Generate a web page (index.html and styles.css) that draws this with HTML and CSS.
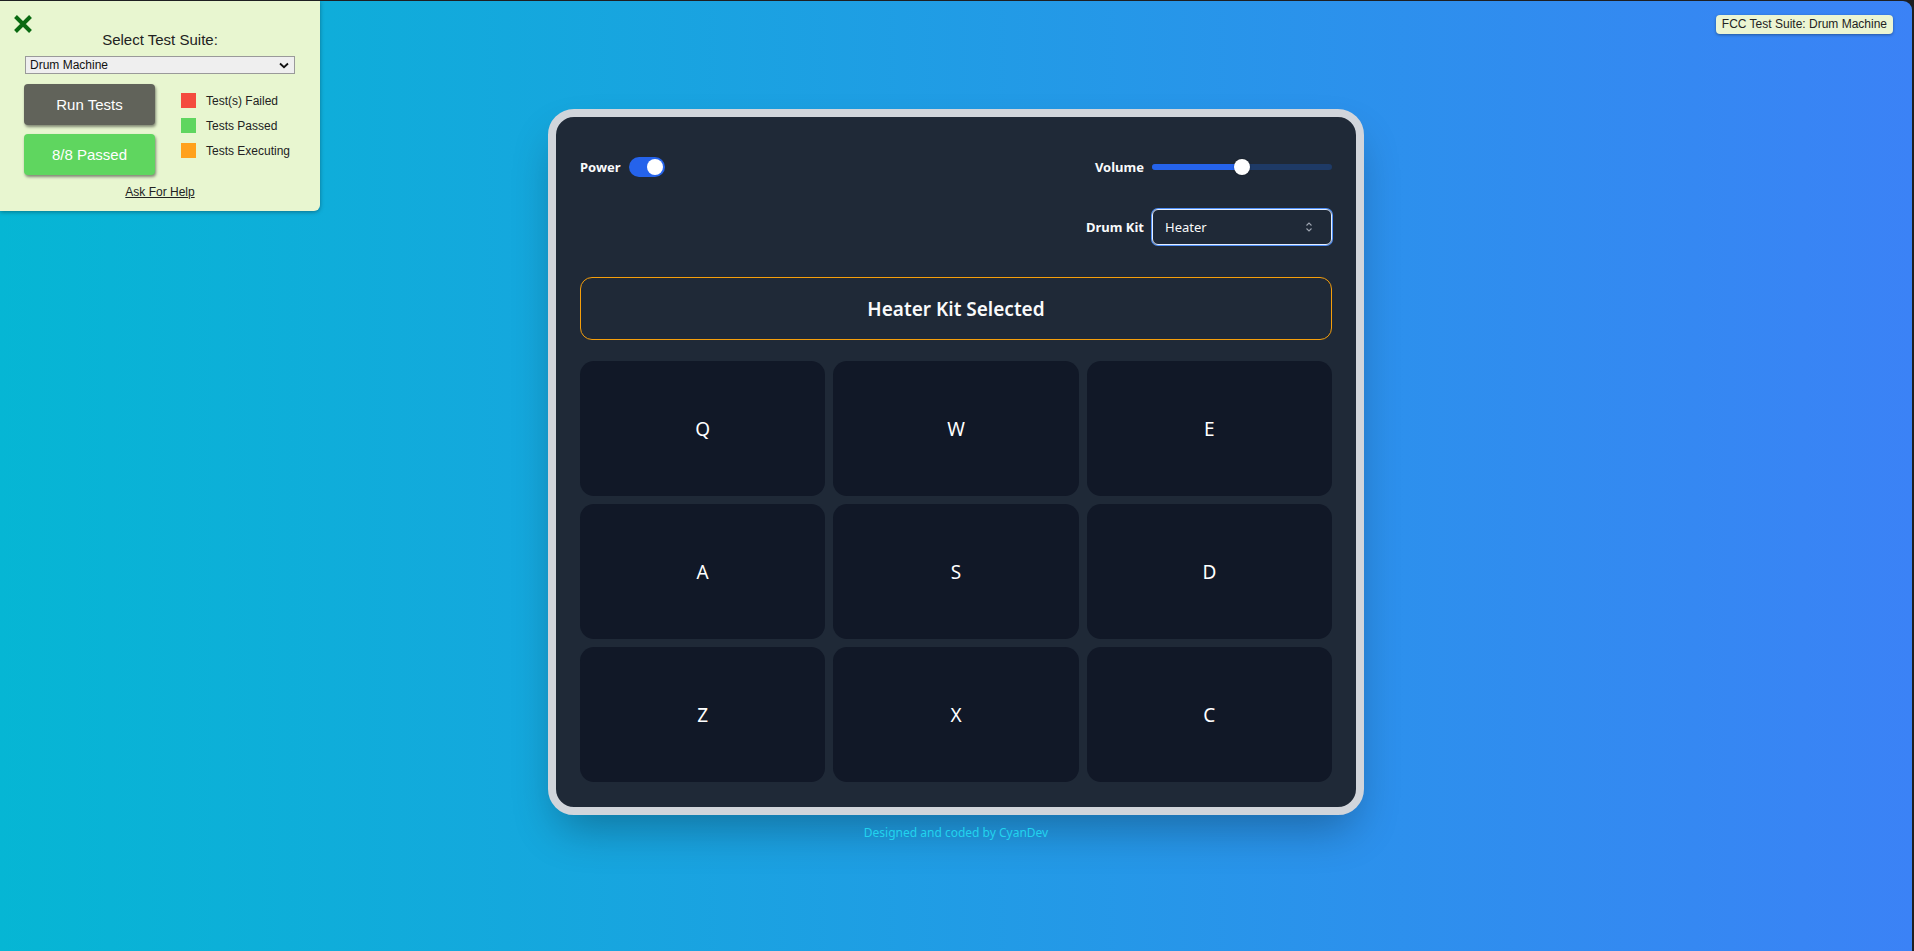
FILE: index.html
```html
<!DOCTYPE html>
<html lang="en">
<head>
<meta charset="utf-8">
<title>Drum Machine</title>
<link rel="stylesheet" href="styles.css">
</head>
<body>
<div class="viewport">
  <aside class="fcc-panel">
    <svg class="fcc-close" width="20" height="20" viewBox="0 0 20 20"><path d="M2.5 2.5 L17.5 17.5 M17.5 2.5 L2.5 17.5" stroke="#0a6a12" stroke-width="4" stroke-linecap="butt"/></svg>
    <div class="fcc-title">Select Test Suite:</div>
    <div class="fcc-select"><span>Drum Machine</span><svg width="10" height="7" viewBox="0 0 10 7"><path d="M1 1.5 L5 5.2 L9 1.5" fill="none" stroke="#111" stroke-width="1.8"/></svg></div>
    <div class="fcc-body">
      <div class="fcc-buttons">
        <div class="fcc-btn fcc-run">Run Tests</div>
        <div class="fcc-btn fcc-pass">8/8 Passed</div>
      </div>
      <ul class="fcc-legend">
        <li><span class="sw sw-red"></span>Test(s) Failed</li>
        <li><span class="sw sw-green"></span>Tests Passed</li>
        <li><span class="sw sw-orange"></span>Tests Executing</li>
      </ul>
    </div>
    <div class="fcc-help">Ask For Help</div>
  </aside>
  <div class="fcc-badge">FCC Test Suite: Drum Machine</div>

  <main class="stage">
    <div class="machine" id="drum-machine">
      <div class="controls">
        <div class="row row-split">
          <div class="control">
            <span class="label">Power</span>
            <div class="toggle"><span class="toggle-knob"></span></div>
          </div>
          <div class="control">
            <span class="label">Volume</span>
            <div class="slider">
              <div class="slider-fill" style="width:50%"></div>
              <span class="slider-thumb" style="left:50%"></span>
            </div>
          </div>
        </div>
        <div class="row row-end">
          <div class="control">
            <span class="label">Drum Kit</span>
            <div class="kit-select">
              <span>Heater</span>
              <svg width="8" height="12" viewBox="0 0 8 12"><path d="M1.5 4.5 L4 2 L6.5 4.5 M1.5 7.5 L4 10 L6.5 7.5" fill="none" stroke="#9ca3af" stroke-width="1.1"/></svg>
            </div>
          </div>
        </div>
      </div>
      <div class="display" id="display">Heater Kit Selected</div>
      <div class="pads">
        <div class="drum-pad">Q</div>
        <div class="drum-pad">W</div>
        <div class="drum-pad">E</div>
        <div class="drum-pad">A</div>
        <div class="drum-pad">S</div>
        <div class="drum-pad">D</div>
        <div class="drum-pad">Z</div>
        <div class="drum-pad">X</div>
        <div class="drum-pad">C</div>
      </div>
    </div>
    <p class="credit">Designed and coded by CyanDev</p>
  </main>
</div>
</body>
</html>
```

FILE: styles.css
```css
* { box-sizing: border-box; }
html { background: #1e1f22; }
body { margin: 0; }

.viewport {
  position: relative;
  margin: 1px 2px 0 0;
  height: 950px;
  border-top-right-radius: 9px;
  overflow: hidden;
  background: linear-gradient(to right, #06b6d4, #3b82f6);
}

/* FCC test panel */
.fcc-panel {
  position: absolute;
  left: 0;
  top: 0;
  width: 320px;
  height: 210px;
  background: #e8f6d0;
  border-bottom-right-radius: 6px;
  box-shadow: 0 1px 4px rgba(0,0,0,.35);
  font-family: "Liberation Sans", Arial, sans-serif;
  color: #222;
}
.fcc-close { position: absolute; left: 13px; top: 13px; }
.fcc-title {
  padding-top: 32px;
  text-align: center;
  font-size: 15px;
  line-height: 14px;
}
.fcc-select {
  margin: 9px 0 0 25px;
  width: 270px;
  height: 18px;
  border: 1px solid #9a9a9a;
  background: #efefef;
  display: flex;
  align-items: center;
  justify-content: space-between;
  padding: 0 5px 0 4px;
  font-size: 12px;
  color: #111;
}
.fcc-body {
  display: flex;
  margin: 10px 0 0 24px;
  gap: 26px;
}
.fcc-buttons { display: flex; flex-direction: column; gap: 9px; }
.fcc-btn {
  width: 131px;
  height: 41px;
  border-radius: 4px;
  display: flex;
  align-items: center;
  justify-content: center;
  color: #fff;
  font-size: 15px;
  box-shadow: 1px 2px 3px rgba(0,0,0,.45);
}
.fcc-run { background: #61635a; }
.fcc-pass { background: #5fd65f; }
.fcc-legend {
  list-style: none;
  margin: 9px 0 0;
  padding: 0;
  display: flex;
  flex-direction: column;
  gap: 10px;
  font-size: 12px;
}
.fcc-legend li { display: flex; align-items: center; gap: 10px; height: 15px; }
.sw { width: 15px; height: 15px; display: inline-block; }
.sw-red { background: #f44b3f; }
.sw-green { background: #5fd65f; }
.sw-orange { background: #ffa11c; }
.fcc-help {
  text-align: center;
  margin-top: 10px;
  font-size: 12px;
  text-decoration: underline;
}

.fcc-badge {
  position: absolute;
  right: 19px;
  top: 14px;
  height: 19px;
  padding: 0 6px;
  background: #ebf5d3;
  border-radius: 4px;
  box-shadow: 0 1px 3px rgba(0,0,0,.35);
  font-family: "Liberation Sans", Arial, sans-serif;
  font-size: 12px;
  line-height: 19px;
  color: #222;
}

/* Stage */
.stage {
  height: 100%;
  display: flex;
  flex-direction: column;
  align-items: center;
  justify-content: center;
  font-family: "Noto Sans", "Open Sans", sans-serif;
  padding-bottom: 2px;
}
.machine {
  width: 816px;
  height: 706px;
  border: 8px solid #d1d5db;
  border-radius: 26px;
  background: #1f2937;
  padding: 24px;
  box-shadow: 0 22px 45px -10px rgba(0,0,0,.3);
  color: #f3f4f6;
}
.controls {
  display: flex;
  flex-direction: column;
  gap: 24px;
  padding-top: 8px;
  margin-bottom: 32px;
}
.row { display: flex; align-items: center; height: 36px; }
.row-split { justify-content: space-between; }
.row-end { justify-content: flex-end; }
.control { display: flex; align-items: center; gap: 8px; }
.label { font-size: 13px; font-weight: 700; color: #f9fafb; }
.toggle {
  position: relative;
  width: 36px;
  height: 20px;
  border-radius: 10px;
  background: #2563eb;
}
.toggle-knob {
  position: absolute;
  right: 2px;
  top: 2px;
  width: 16px;
  height: 16px;
  border-radius: 50%;
  background: #fff;
}
.slider {
  position: relative;
  width: 180px;
  height: 6px;
  border-radius: 3px;
  background: #1e3a66;
}
.slider-fill { height: 100%; border-radius: 3px; background: #2563eb; }
.slider-thumb {
  position: absolute;
  top: -5px;
  width: 16px;
  height: 16px;
  margin-left: -8px;
  border-radius: 50%;
  background: #fff;
  box-shadow: 0 0 2px rgba(0,0,0,.4);
}
.kit-select {
  width: 180px;
  height: 36px;
  border: 1px solid #e4eeff;
  box-shadow: 0 0 0 1px #4f8ff7;
  border-radius: 6px;
  display: flex;
  align-items: center;
  justify-content: space-between;
  padding: 0 18px 0 12px;
  font-size: 13px;
  color: #f9fafb;
}
.display {
  height: 63px;
  border: 1px solid #f59e0b;
  border-radius: 12px;
  display: flex;
  align-items: center;
  justify-content: center;
  font-size: 19px;
  font-weight: 600;
  color: #f9fafb;
  margin-bottom: 21px;
}
.pads {
  display: grid;
  grid-template-columns: repeat(3, 1fr);
  grid-auto-rows: 135px;
  gap: 8px;
}
.drum-pad {
  background: #111827;
  border-radius: 14px;
  display: flex;
  align-items: center;
  justify-content: center;
  font-size: 19px;
  color: #fff;
}
.credit {
  margin: 10px 0 0;
  font-family: "Noto Sans", "Open Sans", sans-serif;
  font-size: 12px;
  line-height: 16px;
  color: #22d3ee;
}
```
